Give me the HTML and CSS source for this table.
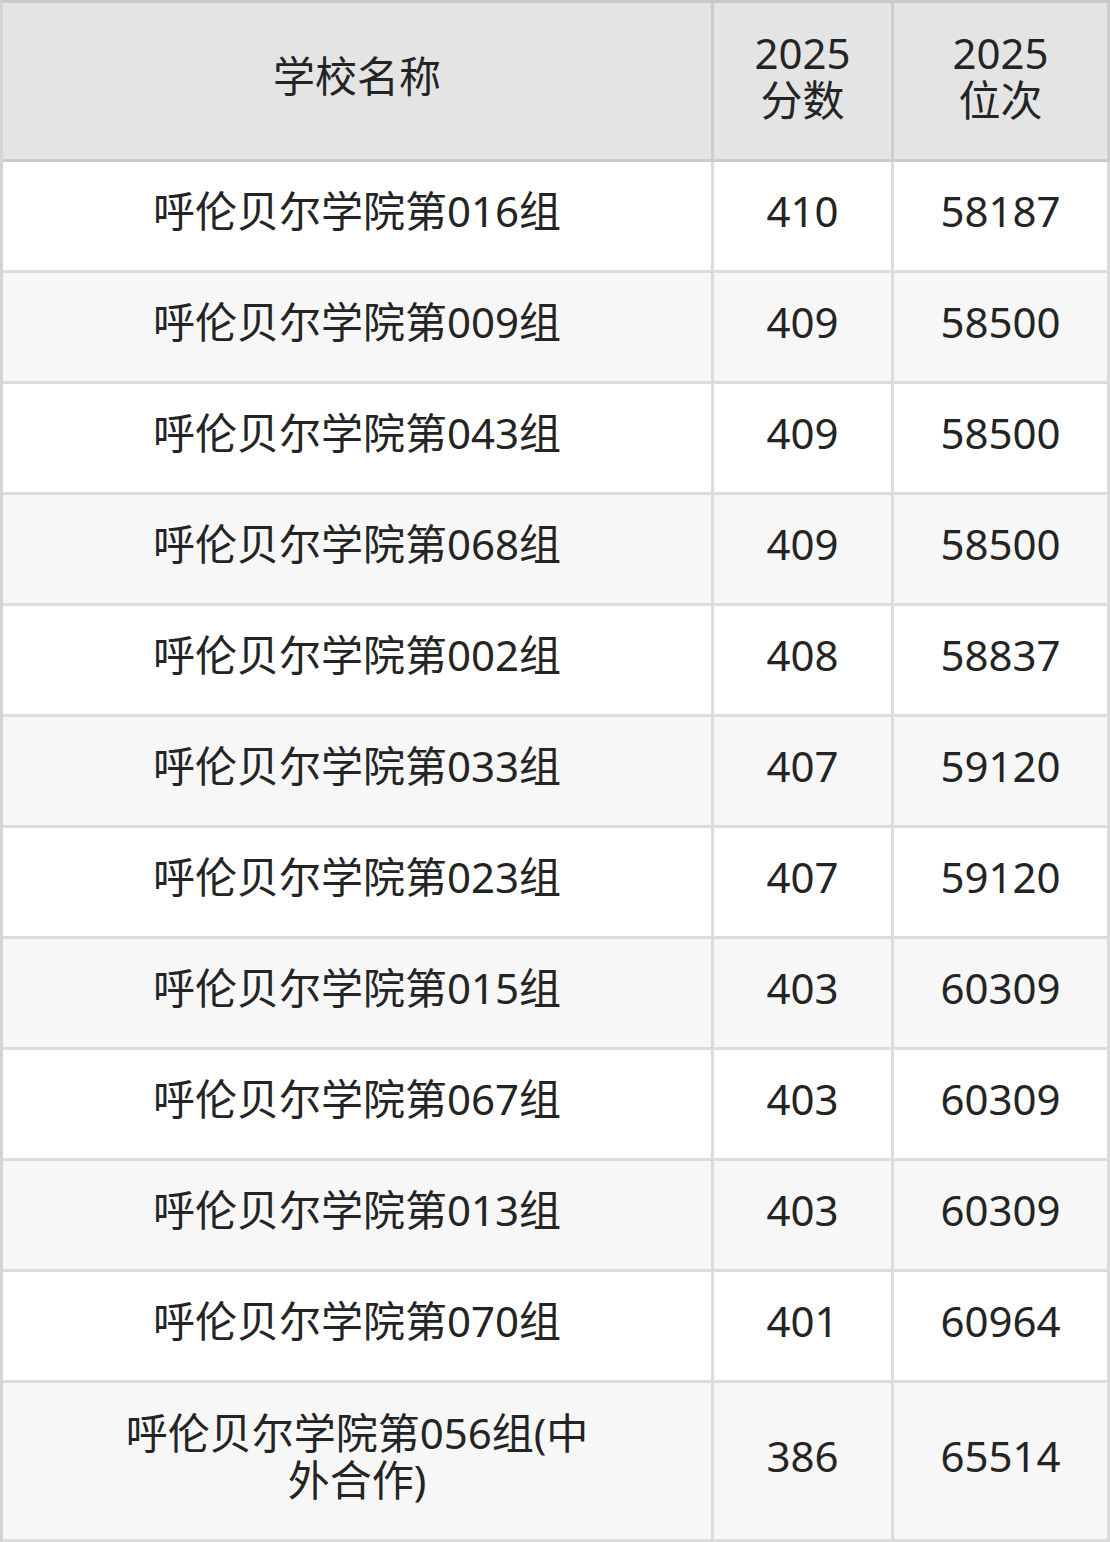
FILE: index.html
```html
<!DOCTYPE html>
<html lang="zh-CN">
<head>
<meta charset="utf-8">
<title>呼伦贝尔学院 2025 分数位次</title>
<link rel="stylesheet" href="styles.css">
</head>
<body>
<table class="score-table">
  <colgroup>
    <col class="col-name">
    <col class="col-score">
    <col class="col-rank">
  </colgroup>
  <thead>
    <tr>
      <th class="name">学校名称</th>
      <th>2025<br>分数</th>
      <th>2025<br>位次</th>
    </tr>
  </thead>
  <tbody>
    <tr><td class="name">呼伦贝尔学院第016组</td><td>410</td><td>58187</td></tr>
    <tr><td class="name">呼伦贝尔学院第009组</td><td>409</td><td>58500</td></tr>
    <tr><td class="name">呼伦贝尔学院第043组</td><td>409</td><td>58500</td></tr>
    <tr><td class="name">呼伦贝尔学院第068组</td><td>409</td><td>58500</td></tr>
    <tr><td class="name">呼伦贝尔学院第002组</td><td>408</td><td>58837</td></tr>
    <tr><td class="name">呼伦贝尔学院第033组</td><td>407</td><td>59120</td></tr>
    <tr><td class="name">呼伦贝尔学院第023组</td><td>407</td><td>59120</td></tr>
    <tr><td class="name">呼伦贝尔学院第015组</td><td>403</td><td>60309</td></tr>
    <tr><td class="name">呼伦贝尔学院第067组</td><td>403</td><td>60309</td></tr>
    <tr><td class="name">呼伦贝尔学院第013组</td><td>403</td><td>60309</td></tr>
    <tr><td class="name">呼伦贝尔学院第070组</td><td>401</td><td>60964</td></tr>
    <tr class="tall"><td class="name">呼伦贝尔学院第056组(中外合作)</td><td>386</td><td>65514</td></tr>
  </tbody>
</table>
</body>
</html>
```

FILE: styles.css
```css
html, body {
  margin: 0;
  padding: 0;
  background: #ffffff;
}

.score-table {
  width: 1110px;
  table-layout: fixed;
  border-collapse: separate;
  border-spacing: 0;
  border-top: 3px solid #c9c9c9;
  border-left: 3px solid #d4d4d4;
  font-family: "Noto Sans", "Noto Sans CJK SC", sans-serif;
  font-size: 42px;
  line-height: 47px;
  color: #242424;
}

.col-name { width: 711px; }
.col-score { width: 180px; }
.col-rank { width: 216px; }

.score-table th,
.score-table td {
  box-sizing: border-box;
  padding: 0 0 11px 0;
  text-align: center;
  vertical-align: middle;
  font-weight: 400;
  border-right: 3px solid #dcdcdc;
  border-bottom: 3px solid #dcdcdc;
}

.score-table th {
  height: 159px;
  background: #e4e4e4;
  border-right-color: #cdcdcd;
  border-bottom-color: #cbcbcb;
}

.score-table td {
  height: 111px;
}

.score-table tbody tr:nth-child(odd) td { background: #ffffff; }
.score-table tbody tr:nth-child(even) td { background: #f7f7f7; }

.score-table tr.tall td {
  height: 159px;
}

.score-table .name {
  padding-left: 114px;
  padding-right: 114px;
}
```
